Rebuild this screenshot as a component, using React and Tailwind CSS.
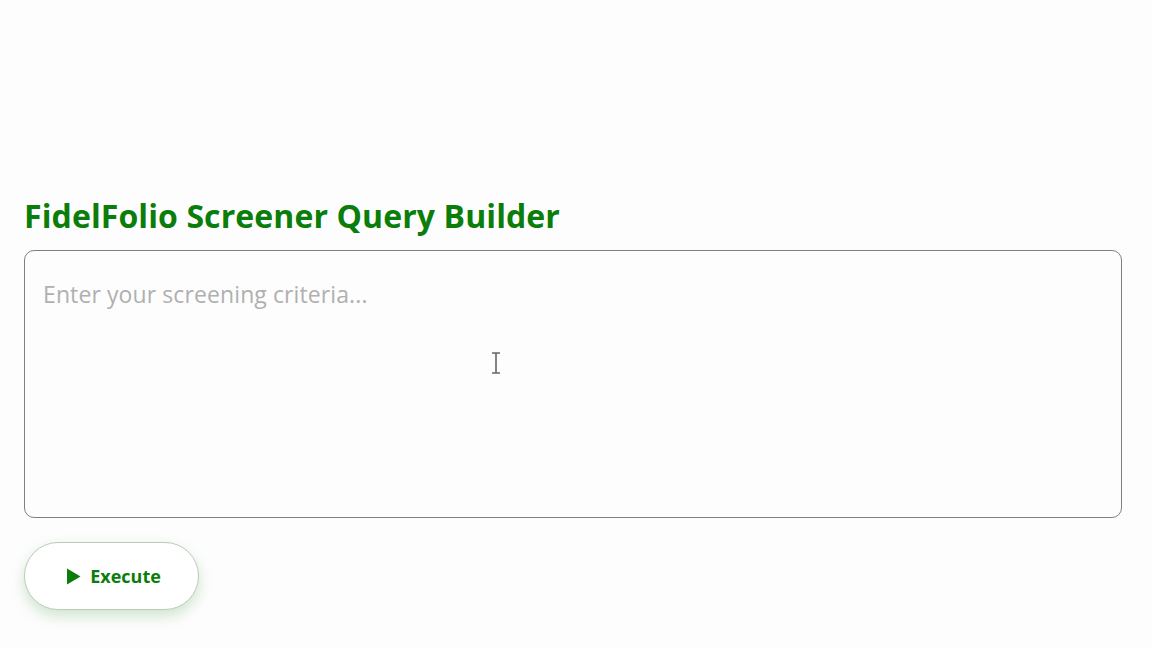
import { useState } from 'react';

const App = () => {
    const [query, setQuery] = useState('');

    return (
        <div className="min-h-[648px] bg-[#fdfdfd] pl-6 pr-[30px] pt-[194px]" style={{ fontFamily: '"Open Sans", "Noto Sans", sans-serif' }}>
            <h1 className="text-[32px] leading-[44px] font-bold text-[#0a7d0a] tracking-[0.1px] whitespace-nowrap">
                FidelFolio Screener Query Builder
            </h1>

            <div className="relative mt-[12px]">
                <textarea
                    className="block w-full h-[268px] resize-none rounded-[10px] border-[1.5px] border-[#7f7f7f] bg-[#fdfdfd] px-[18px] py-[26px] text-[23px] leading-[34px] tracking-[0.1px] text-gray-800 placeholder:text-[#b0b0b0] outline-none"
                    style={{ fontFamily: '"Open Sans", "Noto Sans", sans-serif' }}
                    placeholder="Enter your screening criteria..."
                    value={query}
                    onChange={(e) => setQuery(e.target.value)}
                />
                {/* mouse text cursor seen in the screenshot */}
                <svg className="absolute left-[467px] top-[102px] pointer-events-none" width="10" height="22" viewBox="0 0 10 22">
                    <path d="M1 1h8M5 1v20M1 21h8" stroke="#666" strokeWidth="1.6" fill="none" />
                </svg>
            </div>

            <button className="mt-6 flex items-center justify-center gap-[9px] w-[175px] h-[68px] pl-[4px] rounded-full border border-[#bccbbc] bg-white shadow-[0_6px_14px_rgba(40,140,40,0.22)] text-[#0a7d0a] font-bold text-[18px]">
                <svg width="15" height="17" viewBox="0 0 15 17">
                    <path d="M1 0.5L14.5 8.5L1 16.5Z" fill="#0a7d0a" />
                </svg>
                Execute
            </button>
        </div>
    );
};

export default App;
